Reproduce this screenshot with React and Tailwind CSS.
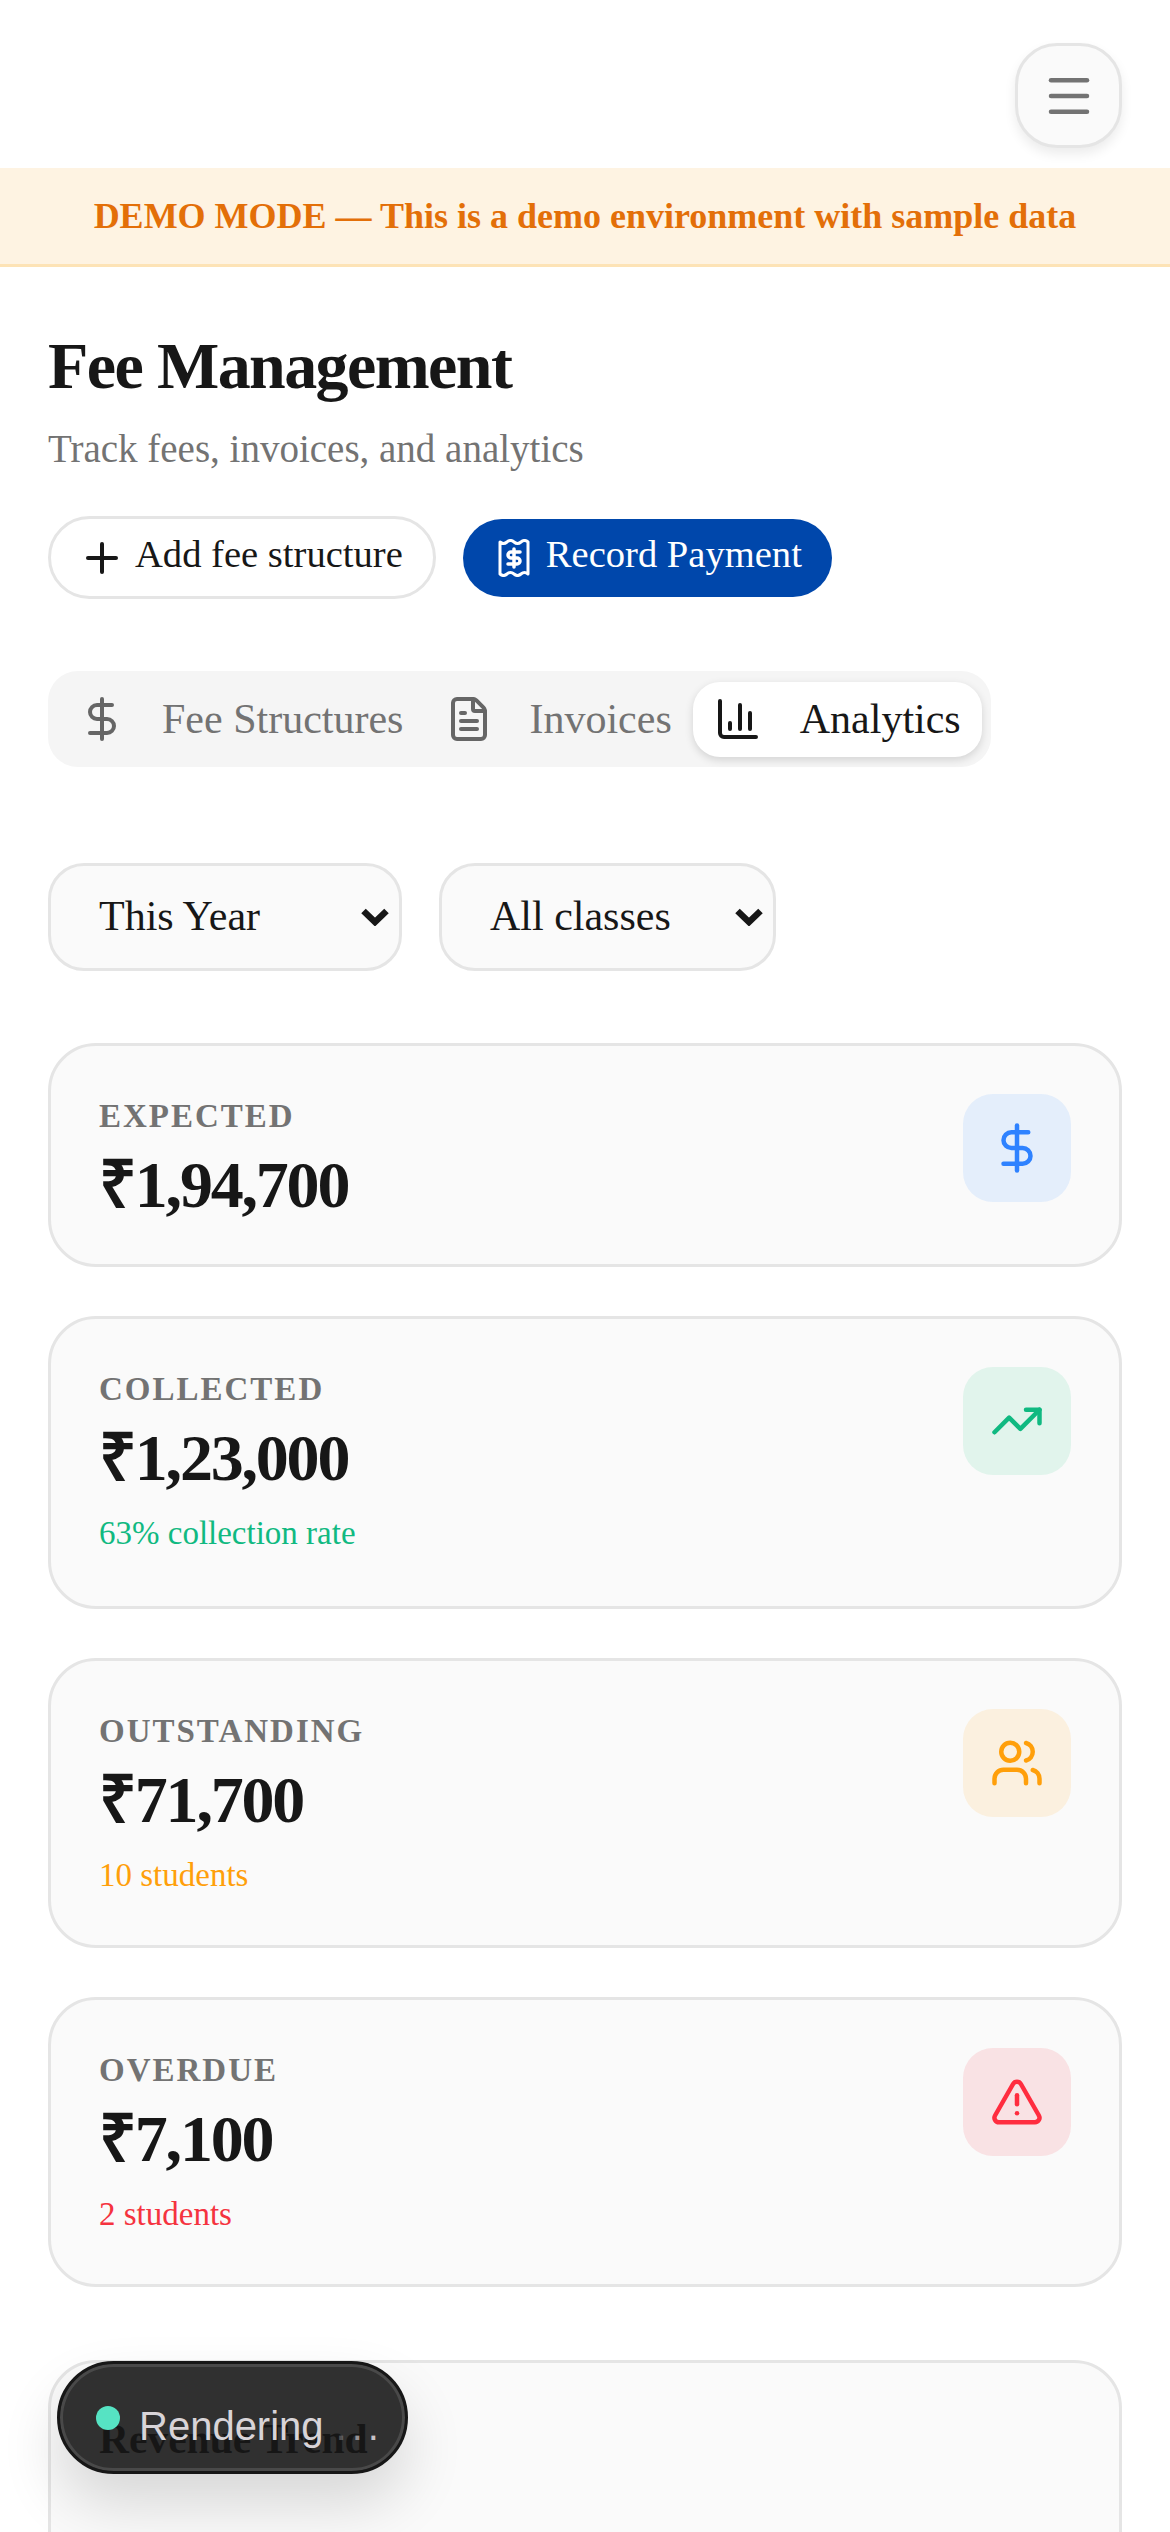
import React from "react";
import { Plus, DollarSign, FileText, ChartColumn, TrendingUp, Users, AlertTriangle, Menu } from "lucide-react";

function ReceiptIcon() {
  return (
    <svg width="32" height="38" viewBox="0 0 32 38" fill="none" stroke="currentColor" strokeWidth="3" strokeLinejoin="round" strokeLinecap="round">
      <path d="M2 3 q3.5 3 7 0 t7 0 t7 0 t7 0 V35 q-3.5 -3 -7 0 t-7 0 t-7 0 t-7 0 Z" />
      <path d="M22 13 H13 a3 3 0 0 0 0 6 H19 a3 3 0 0 1 0 6 H10 M16 10 V28" strokeWidth="3.5" />
    </svg>
  );
}

function SelectArrow() {
  return (
    <svg width="28" height="18" viewBox="0 0 28 18" fill="none" stroke="currentColor" strokeWidth="6.5">
      <path d="M2.5 3 L14 14 L25.5 3" />
    </svg>
  );
}

function Stat({ label, value, sub, subClass, iconBg, iconClass, Icon, heightClass }) {
  return (
    <div className={`flex justify-between rounded-[48px] border-[3px] border-[#e5e5e5] bg-[#fafafa] p-12 ${heightClass}`}>
      <div className="flex flex-col">
        <div className="text-[33px] leading-[44px] font-bold tracking-[2px] text-[#737373]">{label}</div>
        <div className="mt-[5px] text-[66px] leading-[84px] font-bold tracking-[-2.2px] text-[#171717]">{value}</div>
        {sub && <div className={`mt-[9px] text-[33px] leading-[48px] ${subClass}`}>{sub}</div>}
      </div>
      <div className={`flex h-[108px] w-[108px] items-center justify-center rounded-[30px] ${iconBg}`}>
        <Icon size={54} strokeWidth={2} className={iconClass} />
      </div>
    </div>
  );
}

function Select({ label, widthClass }) {
  return (
    <div className={`flex h-[108px] items-center justify-between rounded-[36px] border-[3px] border-[#e5e5e5] bg-[#fafafa] pl-12 pr-[10px] text-[42px] text-[#171717] ${widthClass}`}>
      <span className="mb-[1px]">{label}</span>
      <SelectArrow />
    </div>
  );
}

export default function App() {
  return (
    <div className="relative h-[2532px] w-[1170px] overflow-hidden bg-white font-['Liberation_Serif',serif]">
      <div className="flex h-[168px] items-start justify-end pr-12 pt-[43px]">
        <div className="flex h-[105px] w-[107px] items-center justify-center rounded-[42px] border-[3px] border-[#e5e5e5] bg-[#fafafa] shadow-[0_6px_12px_rgba(0,0,0,0.08)]">
          <Menu size={54} strokeWidth={2} className="text-[#737373]" />
        </div>
      </div>
      <div className="flex h-[99px] items-center justify-center border-b-[3px] border-[#fde3b6] bg-[#fef3e2] text-[36px] font-bold text-[#e36f08]">
        DEMO MODE — This is a demo environment with sample data
      </div>
      <div className="px-12 pt-[59px]">
        <h1 className="text-[66px] leading-[80px] font-bold tracking-[-1.6px] text-[#171717]">Fee Management</h1>
        <p className="mt-[17px] text-[39px] leading-[52px] text-[#737373]">Track fees, invoices, and analytics</p>
        <div className="mt-[41px] flex items-center gap-[27px]">
          <div className="flex h-[83px] items-center gap-[9px] rounded-full border-[3px] border-[#e5e5e5] bg-white pl-[27px] pr-[30px] text-[38.6px] text-[#171717]">
            <Plus size={48} strokeWidth={2} />
            <span className="mb-[6px]">Add fee structure</span>
          </div>
          <div className="flex h-[78px] items-center gap-[16px] rounded-full bg-[#0047ab] pl-[35px] pr-[30px] text-[38.6px] text-white">
            <ReceiptIcon />
            <span className="mb-[6px]">Record Payment</span>
          </div>
        </div>
        <div className="mt-[72px] flex h-[96px] w-fit items-center rounded-[30px] bg-[#f5f5f5] px-[9px] text-[42px]">
          <div className="flex items-center gap-[36px] px-[21px] text-[#737373]">
            <DollarSign size={48} strokeWidth={2} className="text-[#666]" />
            Fee Structures
          </div>
          <div className="flex items-center gap-[36px] px-[21px] text-[#737373]">
            <FileText size={48} strokeWidth={2} className="text-[#666]" />
            Invoices
          </div>
          <div className="flex h-[75px] items-center gap-[38px] rounded-[27px] bg-white px-[21px] text-[#171717] shadow-[0_3px_9px_rgba(0,0,0,0.14)]">
            <ChartColumn size={48} strokeWidth={2} />
            Analytics
          </div>
        </div>
        <div className="mt-[96px] flex gap-[37px]">
          <Select label="This Year" widthClass="w-[354px]" />
          <Select label="All classes" widthClass="w-[337px]" />
        </div>
        <div className="mt-[72px] flex flex-col gap-[49px]">
          <Stat label="EXPECTED" value="₹1,94,700" iconBg="bg-[#e4eefb]" iconClass="text-[#2e82ff]" Icon={DollarSign} heightClass="h-[224px]" />
          <Stat label="COLLECTED" value="₹1,23,000" sub="63% collection rate" subClass="text-[#10b981]" iconBg="bg-[#e1f4ec]" iconClass="text-[#10b981]" Icon={TrendingUp} heightClass="h-[293px]" />
          <Stat label="OUTSTANDING" value="₹71,700" sub="10 students" subClass="text-[#ff9f0a]" iconBg="bg-[#fbf0df]" iconClass="text-[#ff9f0a]" Icon={Users} heightClass="h-[290px]" />
          <Stat label="OVERDUE" value="₹7,100" sub="2 students" subClass="text-[#f5333f]" iconBg="bg-[#f9e2e4]" iconClass="text-[#ff2d3f]" Icon={AlertTriangle} heightClass="h-[290px]" />
        </div>
        <div className="mt-[73px] h-[400px] rounded-t-[48px] border-[3px] border-[#e5e5e5] bg-[#fafafa] p-12">
          <h2 className="text-[41.5px] leading-[56px] font-bold text-[#171717]">Revenue Trend</h2>
        </div>
      </div>
      <div className="absolute left-[57px] top-[2361px] flex h-[113px] w-[351px] items-center rounded-full border-[3px] border-[#171717] bg-[rgba(22,22,22,0.89)] pl-[36px] shadow-[inset_0_0_0_3px_rgba(255,255,255,0.12),0_30px_60px_rgba(0,0,0,0.14)]">
        <span className="h-[24px] w-[24px] rounded-full bg-[#56e3c3]" />
        <span className="ml-[19px] mt-[16px] font-['Liberation_Sans',sans-serif] text-[40px] leading-[48px] text-[#d8d4d8]">
          Rendering
          <span className="ml-[12px] tracking-[5px] opacity-30">.</span>
          <span className="tracking-[5px] opacity-60">.</span>
          <span className="opacity-90">.</span>
        </span>
      </div>
    </div>
  );
}
